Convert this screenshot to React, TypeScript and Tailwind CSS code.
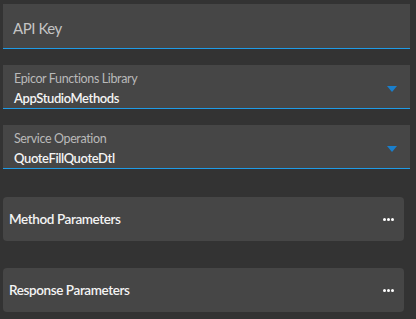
import React from 'react';

function Arrow() {
  return (
    <svg width="10" height="6" viewBox="0 0 10 6" className="shrink-0 mt-[4px]">
      <path d="M0 0 L10 0 L5 6 Z" fill="#1a7fcc" />
    </svg>
  );
}

function SelectField({ label, value }: { label: string; value: string }) {
  return (
    <div className="flex items-center bg-[#464646] border-b-[1.5px] border-[#1f9be6] h-[44px] pl-[11px] pr-[13px]">
      <div className="flex-1 flex flex-col leading-none self-start pt-[8px]">
        <span className="text-[12.5px] tracking-[-0.03em] text-[#b9b9b9]">{label}</span>
        <span className="text-[13px] tracking-[-0.03em] font-semibold text-[#f4f4f4] mt-[6px]">{value}</span>
      </div>
      <Arrow />
    </div>
  );
}

function Section({ title }: { title: string }) {
  return (
    <div className="flex items-center justify-between bg-[#464646] rounded-[4px] h-[44px] pl-[6px] pr-[10px] mr-[6px]">
      <span className="text-[13.5px] tracking-[-0.03em] font-semibold text-[#f4f4f4]">{title}</span>
      <div className="flex gap-[1px]">
        <span className="w-[3px] h-[3px] bg-white rounded-full" />
        <span className="w-[3px] h-[3px] bg-white rounded-full" />
        <span className="w-[3px] h-[3px] bg-white rounded-full" />
      </div>
    </div>
  );
}

export default function App() {
  return (
    <div className="w-[416px] h-[319px] bg-[#333333] pt-[4px] pl-[3px] pr-[6px]" style={{ fontFamily: 'Lato, "Noto Sans", sans-serif' }}>
      <div className="flex items-center bg-[#464646] border-b-[1.5px] border-[#1f9be6] h-[45px] pl-[10px] pt-[5px]">
        <span className="text-[15px] tracking-[-0.03em] text-[#c4c4c4]">API Key</span>
      </div>
      <div className="mt-[16px]">
        <SelectField label="Epicor Functions Library" value="AppStudioMethods" />
      </div>
      <div className="mt-[16px]">
        <SelectField label="Service Operation" value="QuoteFillQuoteDtl" />
      </div>
      <div className="mt-[28px]">
        <Section title="Method Parameters" />
      </div>
      <div className="mt-[27px]">
        <Section title="Response Parameters" />
      </div>
    </div>
  );
}
